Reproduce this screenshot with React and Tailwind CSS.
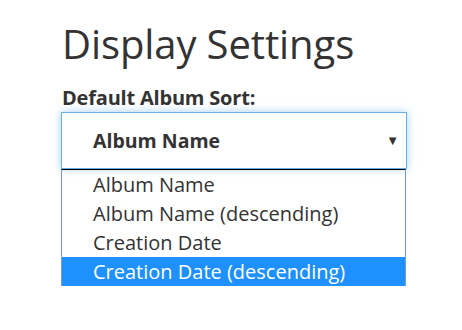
export default function App() {
  const options = [
    'Album Name',
    'Album Name (descending)',
    'Creation Date',
    'Creation Date (descending)',
  ];
  const selected = 3;

  return (
    <div
      className="w-[462px] h-[330px] bg-white text-[#333] overflow-hidden"
      style={{ fontFamily: '"Open Sans", "Noto Sans", sans-serif' }}
    >
      <div className="pl-[61px] pt-[16px]">
        <h1 className="text-[40px] leading-[56px] font-normal tracking-[-0.1px] pl-[1px]">
          Display Settings
        </h1>
        <label className="block text-[20px] leading-[24px] font-bold mt-[14px] pl-[1px] tracking-[-0.2px]">
          Default Album Sort:
        </label>
        <div className="w-[346px] h-[57px] mt-[2px] border border-[#66afe9] shadow-[0_0_8px_rgba(102,175,233,0.6)] flex items-center justify-between pl-[31px] pr-[7px]">
          <span className="text-[19.5px] font-bold text-[#333]">Album Name</span>
          <span className="text-[13px] text-[#333]">▼</span>
        </div>
        <div className="w-[345px] border-t border-t-black border-x border-x-[#7a9cd3]">
          {options.map((o, i) => (
            <div
              key={o}
              className={`h-[29px] flex items-center pl-[31px] text-[20px] ${
                i === selected ? 'bg-[#1e90ff] text-white' : 'text-[#333]'
              }`}
            >
              {o}
            </div>
          ))}
        </div>
      </div>
    </div>
  );
}
